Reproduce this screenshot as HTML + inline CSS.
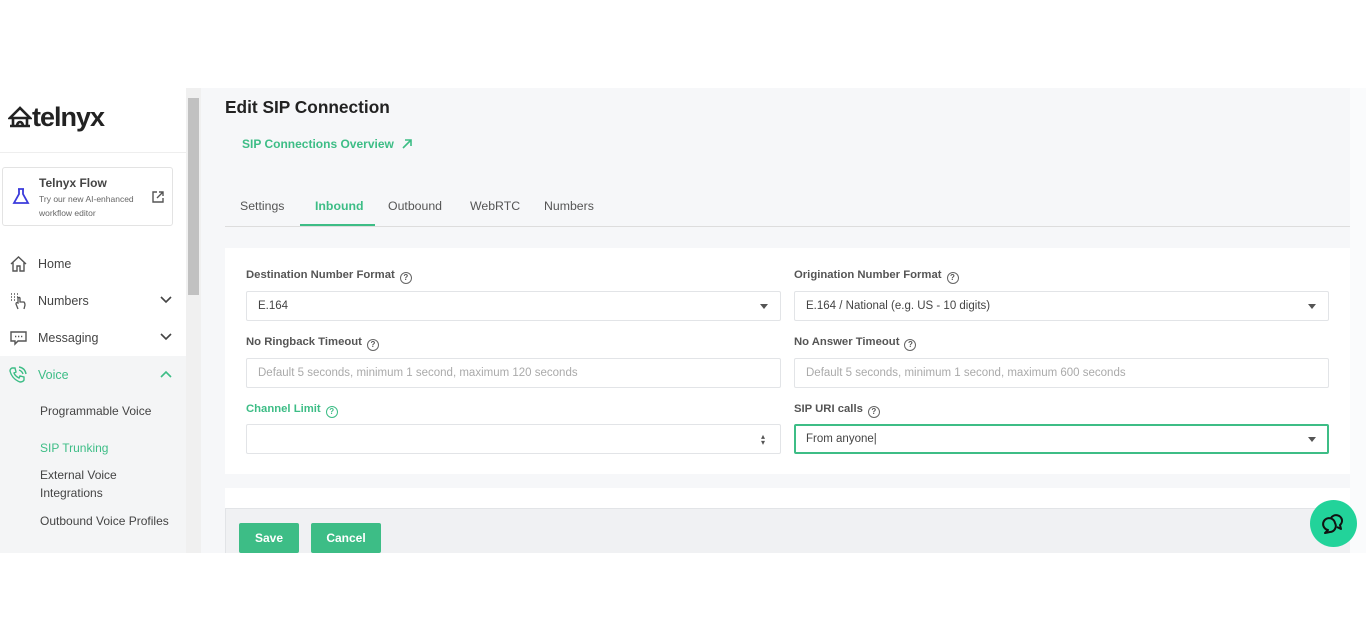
<!DOCTYPE html><html><head><style>
*{box-sizing:border-box;margin:0;padding:0}
body{width:1366px;height:641px;background:#fff;font-family:"Liberation Sans",sans-serif;position:relative;overflow:hidden;color:#333}
.a{position:absolute}
#app{position:absolute;left:0;top:88px;width:1366px;height:465px;background:#f6f7f9;overflow:hidden}
.side{position:absolute;left:0;top:0;width:186px;height:465px;background:#fff}
.nav{position:absolute;left:0;width:186px;height:37px;font-size:12.5px;color:#444}
.nav span{position:absolute;left:38px;top:11px}
.sub{position:absolute;left:40px;font-size:12px;color:#444;line-height:18px}
.lbl{position:absolute;font-size:11.3px;font-weight:bold;color:#555}
.inp{position:absolute;height:30px;background:#fff;border:1px solid #e2e4e7;border-radius:2px;font-size:11.5px;color:#444;padding:8px 11px}
.ph{color:#aaa}
.q{display:inline-block;width:12px;height:12px;border:1.2px solid #666;border-radius:50%;font-size:8px;text-align:center;line-height:10px;margin-left:5px;vertical-align:-2px;font-weight:bold}
.car{position:absolute;right:12px;top:12px;border-left:4px solid transparent;border-right:4px solid transparent;border-top:5px solid #555}
.tab{position:absolute;top:111px;font-size:12.3px;color:#555}
.btn{position:absolute;top:435px;height:30px;background:#3dbd86;color:#fff;font-weight:bold;font-size:12px;border-radius:2px;text-align:center;line-height:30px}
</style></head><body>
<div id="app">
<div class="side">
 <div class="a" style="left:8px;top:14px;font-size:27px;font-weight:bold;color:#222;letter-spacing:-1px">
  <svg width="24" height="22" viewBox="0 0 24 22" style="vertical-align:-2px"><path d="M12 2 L2 12 H22 Z M2 20 H22 M5 12 V20 M19 12 V20 M9 20 A3 4 0 0 1 15 20" fill="none" stroke="#222" stroke-width="2.6"/></svg>telnyx</div>
 <div class="a" style="left:0;top:64px;width:186px;border-top:1px solid #eee"></div>
 <div class="a" style="left:2px;top:79px;width:171px;height:59px;border:1px solid #e3e3e3;border-radius:3px;background:#fff">
  <svg class="a" style="left:9px;top:19px" width="18" height="18" viewBox="0 0 18 18"><path d="M6 2 H12 M7 2 V7 L2 16 H16 L11 7 V2" fill="none" stroke="#3b3bdb" stroke-width="1.8"/></svg>
  <div class="a" style="left:36px;top:8px;font-size:12px;font-weight:bold;color:#444">Telnyx Flow</div>
  <div class="a" style="left:36px;top:24px;font-size:8.5px;color:#666;line-height:14px">Try our new AI-enhanced<br>workflow editor</div>
  <svg class="a" style="left:148px;top:22px" width="14" height="14" viewBox="0 0 14 14"><path d="M6 2 H2 V12 H12 V8 M8 2 H12 V6 M12 2 L6 8" fill="none" stroke="#555" stroke-width="1.4"/></svg>
 </div>
 <div class="nav" style="top:158px"><svg class="a" style="left:10px;top:10px" width="17" height="16" viewBox="0 0 17 16"><path d="M1 8 L8.5 1 L16 8 M3 6 V15 H7 V10 H10 V15 H14 V6" fill="none" stroke="#555" stroke-width="1.4"/></svg><span>Home</span></div>
 <div class="nav" style="top:195px"><svg class="a" style="left:10px;top:10px" width="17" height="17" viewBox="0 0 17 17"><path d="M1 1h1M4 1h1M7 1h1M1 4h1M4 4h1M7 4h1M1 7h1M4 7h1" stroke="#555" stroke-width="1.6"/><path d="M8 16 L6 11 Q6 9 8 10 V5 Q9 4 10 5 V9 H14 Q15 10 15 12 L14 16" fill="none" stroke="#555" stroke-width="1.3"/></svg><span>Numbers</span><svg class="a" style="left:160px;top:13px" width="12" height="8"><path d="M1 1 L6 6 L11 1" fill="none" stroke="#444" stroke-width="1.6"/></svg></div>
 <div class="nav" style="top:232px"><svg class="a" style="left:10px;top:11px" width="17" height="15" viewBox="0 0 17 15"><path d="M1 1 H16 V10 H8 L5 13 V10 H1 Z" fill="none" stroke="#555" stroke-width="1.4"/><path d="M5 5.5h1.3M8 5.5h1.3M11 5.5h1.3" stroke="#555" stroke-width="1.6"/></svg><span>Messaging</span><svg class="a" style="left:160px;top:13px" width="12" height="8"><path d="M1 1 L6 6 L11 1" fill="none" stroke="#444" stroke-width="1.6"/></svg></div>
 <div class="a" style="left:0;top:268px;width:186px;height:197px;background:#f4f5f6"></div>
 <div class="nav" style="top:269px;color:#3dbd86"><svg class="a" style="left:9px;top:9px" width="18" height="18" viewBox="0 0 18 18"><path d="M3 2 L6 2 L7 6 L5 7 Q6 10 10 12 L11 10 L15 11 L15 14 Q14 16 11 16 Q3 13 1 5 Q1 3 3 2 Z M10 4 Q13 5 14 8 M10 1 Q16 2 17 8" fill="none" stroke="#3dbd86" stroke-width="1.4"/></svg><span>Voice</span><svg class="a" style="left:160px;top:13px" width="12" height="8"><path d="M1 7 L6 2 L11 7" fill="none" stroke="#3dbd86" stroke-width="1.6"/></svg></div>
 <div class="sub" style="top:314px">Programmable Voice</div>
 <div class="sub" style="top:351px;color:#3dbd86">SIP Trunking</div>
 <div class="sub" style="top:378px">External Voice<br>Integrations</div>
 <div class="sub" style="top:424px">Outbound Voice Profiles</div>
</div>
<div class="a" style="left:186px;top:0;width:15px;height:465px;background:#f0f0f0"></div>
<div class="a" style="left:188px;top:10px;width:11px;height:197px;background:#c1c1c1"></div>
<div class="a" style="left:225px;top:9px;font-size:17.3px;font-weight:bold;color:#222">Edit SIP Connection</div>
<div class="a" style="left:242px;top:49px;font-size:12px;font-weight:bold;color:#3dbd86">SIP Connections Overview <svg width="14" height="12" viewBox="0 0 12 12" style="margin-left:3px;vertical-align:-2px"><path d="M2 10 L10 2 M4 2 H10 V8" fill="none" stroke="#3dbd86" stroke-width="1.6"/></svg></div>
<div class="tab" style="left:240px">Settings</div>
<div class="tab" style="left:315px;color:#3dbd86;font-weight:bold">Inbound</div>
<div class="tab" style="left:388px">Outbound</div>
<div class="tab" style="left:470px">WebRTC</div>
<div class="tab" style="left:544px">Numbers</div>
<div class="a" style="left:225px;top:138px;width:1125px;border-top:1px solid #ddd"></div>
<div class="a" style="left:300px;top:136px;width:75px;height:2px;background:#3dbd86"></div>
<div class="a" style="left:225px;top:160px;width:1125px;height:226px;background:#fff"></div>
<div class="lbl" style="left:246px;top:181px">Destination Number Format<span class="q">?</span></div>
<div class="lbl" style="left:794px;top:181px">Origination Number Format<span class="q">?</span></div>
<div class="inp" style="left:246px;top:203px;width:535px">E.164<div class="car"></div></div>
<div class="inp" style="left:794px;top:203px;width:535px">E.164 / National (e.g. US - 10 digits)<div class="car"></div></div>
<div class="lbl" style="left:246px;top:248px">No Ringback Timeout<span class="q">?</span></div>
<div class="lbl" style="left:794px;top:248px">No Answer Timeout<span class="q">?</span></div>
<div class="inp ph" style="left:246px;top:270px;width:535px">Default 5 seconds, minimum 1 second, maximum 120 seconds</div>
<div class="inp ph" style="left:794px;top:270px;width:535px">Default 5 seconds, minimum 1 second, maximum 600 seconds</div>
<div class="lbl" style="left:246px;top:315px;color:#3dbd86">Channel Limit<span class="q" style="border-color:#3dbd86">?</span></div>
<div class="lbl" style="left:794px;top:315px">SIP URI calls<span class="q">?</span></div>
<div class="inp" style="left:246px;top:336px;width:535px"><div class="a" style="right:15px;top:9px;font-size:8px;line-height:6px;color:#555">▴<br>▾</div></div>
<div class="inp" style="left:794px;top:336px;width:535px;border:2px solid #3dbd86;padding:7px 10px">From anyone|<div class="car" style="right:11px;top:11px"></div></div>
<div class="a" style="left:225px;top:400px;width:1125px;height:20px;background:#fff"></div>
<div class="a" style="left:225px;top:420px;width:1125px;height:45px;background:#f0f1f3;border-top:1px solid #e2e4e7;border-left:1px solid #e2e4e7"></div>
<div class="btn" style="left:239px;width:60px">Save</div>
<div class="btn" style="left:311px;width:70px">Cancel</div>
<div class="a" style="left:1350px;top:0;width:16px;height:465px;background:#fafbfc"></div>
<div class="a" style="left:1310px;top:412px;width:47px;height:47px;border-radius:50%;background:#22d39a">
 <svg class="a" style="left:10px;top:10px" width="27" height="27" viewBox="0 0 27 27"><path d="M11 8 A6 6 0 0 1 22 10 A6 6 0 0 1 20 15 L21 19 L17 17" fill="none" stroke="#111" stroke-width="2" stroke-linejoin="round"/><path d="M15 13 A6 6 0 1 0 8 20 L5 23 L10 22 A6 6 0 0 0 15 13 Z" fill="none" stroke="#111" stroke-width="2" stroke-linejoin="round"/></svg>
</div>
</div>
</body></html>
